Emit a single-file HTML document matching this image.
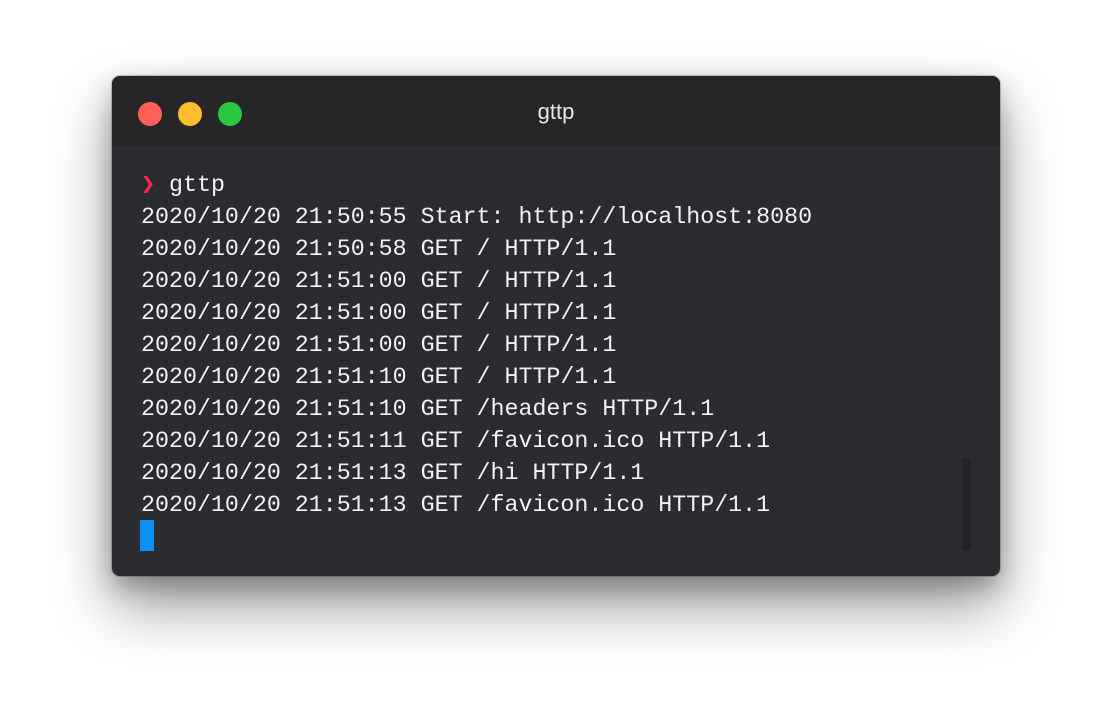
<!DOCTYPE html>
<html><head><style>
body{margin:0;width:1112px;height:724px;background:#fff;position:relative;overflow:hidden;font-family:"Liberation Sans",sans-serif}
.win{position:absolute;left:112px;top:76px;width:888px;height:500px;background:#2b2c2f;border-radius:8px;box-shadow:0 30px 60px rgba(0,0,0,0.4),0 10px 25px rgba(0,0,0,0.25),0 0 0 1px rgba(0,0,0,0.2);overflow:hidden}
.bar{position:absolute;left:0;top:0;width:100%;height:70px;background:#262626}
.dot{position:absolute;top:26px;width:24px;height:24px;border-radius:50%}
.title{position:absolute;top:0;width:100%;text-align:center;line-height:72px;color:#e8e8e8;font-size:22px}
.term{position:absolute;left:29px;top:93px;font-family:"Liberation Mono",monospace;font-size:23.3px;line-height:32px;color:#f2f2f2;white-space:pre}
.cur{position:absolute;left:28px;top:444px;width:14px;height:31px;background:#0a91f7}
.sb{position:absolute;left:850px;top:382px;width:9px;height:93px;background:#232325;border-radius:4px}
</style></head><body>
<div class="win">
<div class="bar">
<div class="dot" style="left:26px;background:#fe5f57"></div>
<div class="dot" style="left:66px;background:#febc2e"></div>
<div class="dot" style="left:106px;background:#28c840"></div>
<div class="title">gttp</div>
</div>
<div class="term"><span style="color:#fe2c55">❯</span> gttp
2020/10/20 21:50:55 Start: http://localhost:8080
2020/10/20 21:50:58 GET / HTTP/1.1
2020/10/20 21:51:00 GET / HTTP/1.1
2020/10/20 21:51:00 GET / HTTP/1.1
2020/10/20 21:51:00 GET / HTTP/1.1
2020/10/20 21:51:10 GET / HTTP/1.1
2020/10/20 21:51:10 GET /headers HTTP/1.1
2020/10/20 21:51:11 GET /favicon.ico HTTP/1.1
2020/10/20 21:51:13 GET /hi HTTP/1.1
2020/10/20 21:51:13 GET /favicon.ico HTTP/1.1</div>
<div class="cur"></div>
<div class="sb"></div>
</div>
</body></html>
